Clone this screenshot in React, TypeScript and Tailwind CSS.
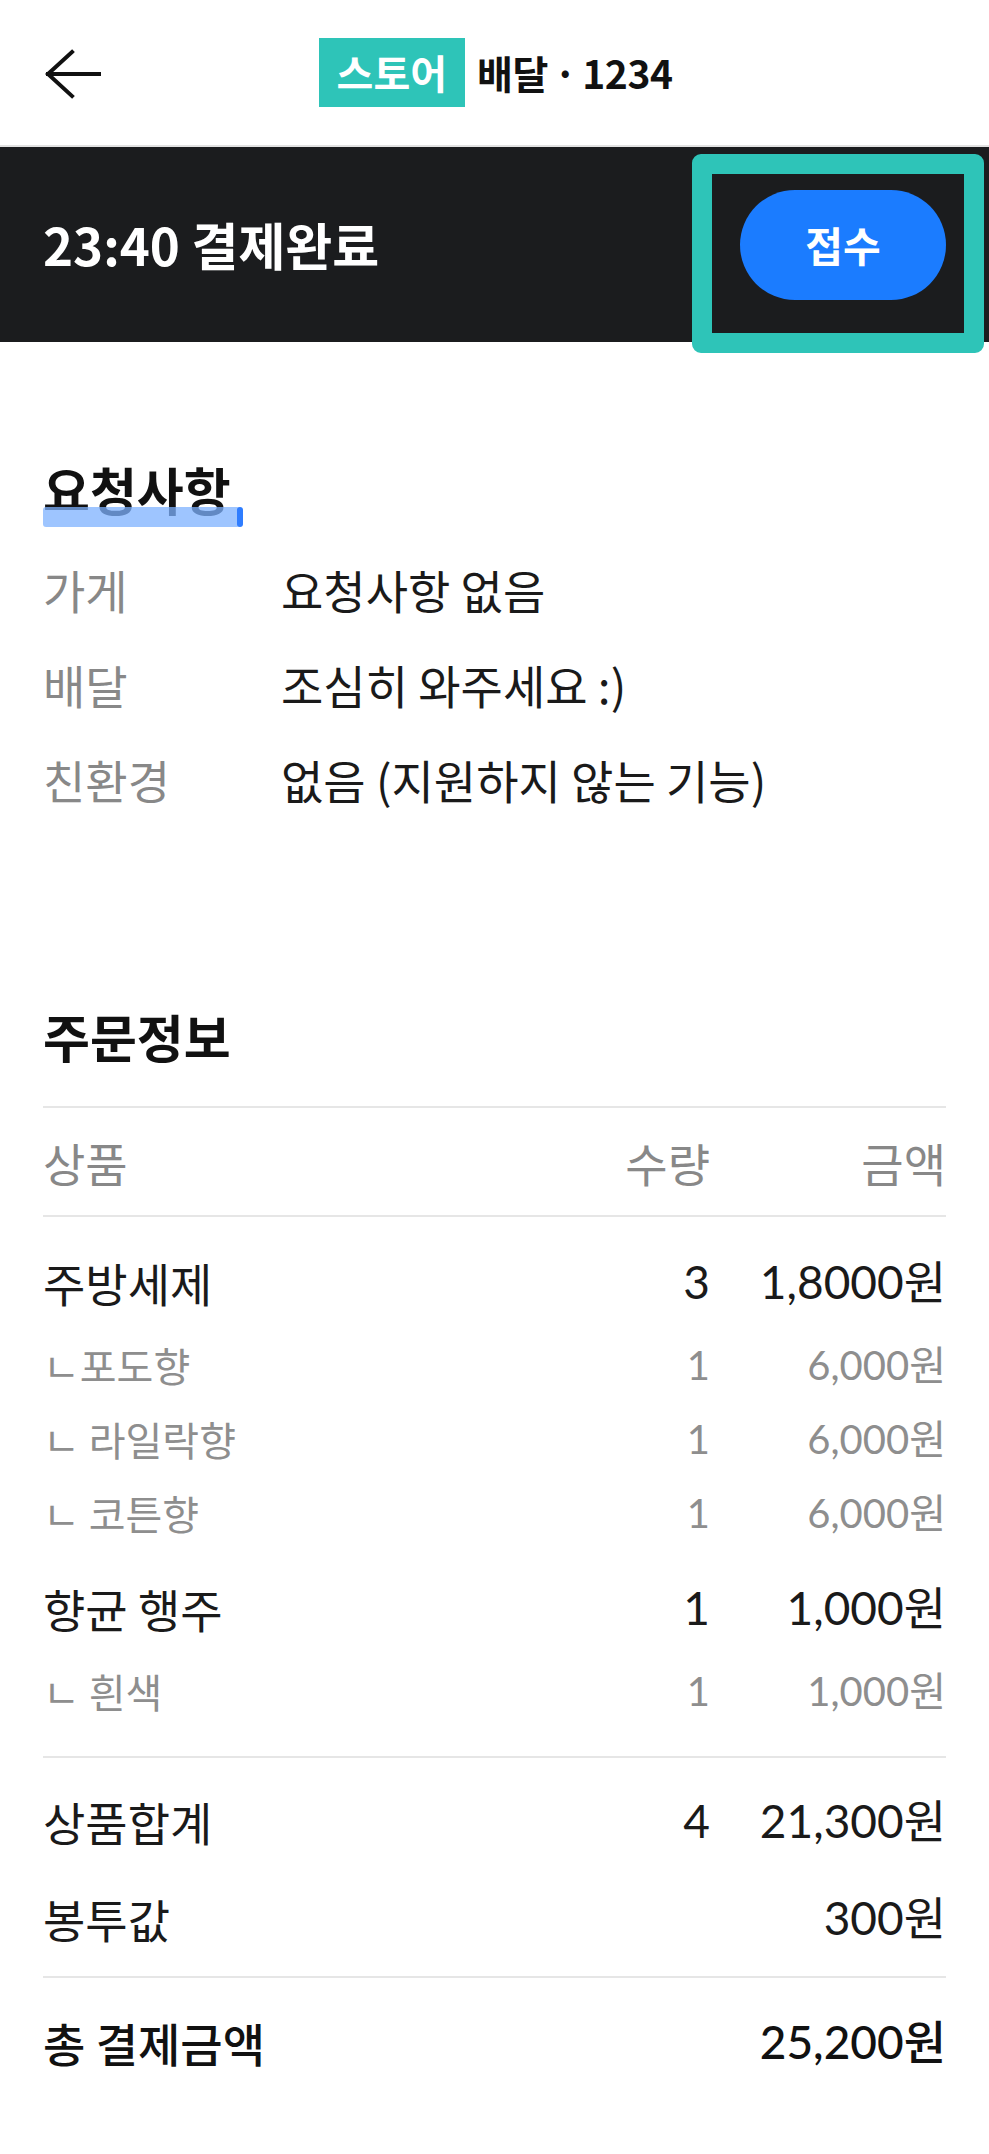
import { ReactNode } from "react";

const KR = "font-['Noto_Sans_CJK_KR',sans-serif]";
const NUM = "font-['Lato','Noto_Sans_CJK_KR',sans-serif]";

function BackArrow() {
  return (
    <svg width="56" height="50" viewBox="0 0 56 50" fill="none" stroke="#111" strokeWidth="4" strokeLinecap="square">
      <path d="M3 25H54" />
      <path d="M27 3L3 25L27 47" />
    </svg>
  );
}

function InfoRow({ label, value }: { label: string; value: string }) {
  return (
    <div className="flex h-[95px] items-center text-[46px] leading-none">
      <span className="w-[238px] text-[#888888]">{label}</span>
      <span className="text-[#1a1a1a]">{value}</span>
    </div>
  );
}

function ItemRow({
  name,
  qty,
  amount,
  sub,
}: {
  name: ReactNode;
  qty?: string;
  amount: string;
  sub?: boolean;
}) {
  const look = sub ? "h-[74px] text-[40px] text-[#8e8e8e]" : "h-[92px] text-[46px] text-[#1a1a1a]";
  return (
    <div className={`flex items-center leading-none ${look}`}>
      <span className="flex-1">{name}</span>
      <span className={`w-[60px] text-right ${NUM}`}>{qty}</span>
      <span className={`w-[236px] text-right ${NUM}`}>{amount}</span>
    </div>
  );
}

export default function App() {
  return (
    <div className={`relative w-[989px] min-h-[2154px] bg-white ${KR}`}>
      {/* top app bar */}
      <header className="relative flex h-[147px] items-center justify-center border-b-2 border-[#e2e2e2]">
        <div className="absolute left-[45px] top-[49px]">
          <BackArrow />
        </div>
        <div className="flex items-center gap-[12px] pb-[1px] pl-[2px]">
          <span className="flex h-[69px] items-center bg-[#2ec4b8] px-[18px] text-[40px] font-bold text-white">
            스토어
          </span>
          <span className="text-[39px] font-bold tracking-[-0.5px] text-[#111]">
            배달<span className="mx-[6px]">·</span>1234
          </span>
        </div>
      </header>

      {/* status bar */}
      <section className="flex h-[195px] items-center justify-between bg-[#1b1c1e] pl-[43px] pr-[43px]">
        <h1 className="text-[51px] font-bold leading-none text-white">23:40 결제완료</h1>
        <button className="h-[110px] w-[206px] rounded-full bg-[#1b7cff] text-[41px] font-bold text-white">
          접수
        </button>
      </section>

      {/* annotation frame around the accept button */}
      <div className="absolute left-[692px] top-[154px] h-[199px] w-[292px] rounded-[9px] border-[20px] border-[#2ec4b8]" />

      <main className="px-[43px] pt-[107px] pb-[60px]">
        {/* requests */}
        <div className="relative flex h-[80px] items-center">
          <h2 className="relative z-10 text-[51px] font-bold leading-none text-[#111]">요청사항</h2>
          <div className="absolute left-0 top-[58px] z-20 h-[20px] w-[200px] rounded-l-[3px] rounded-r-[6px] bg-[#7db2ff]/75">
            <div className="absolute right-0 top-0 h-[20px] w-[6px] rounded-full bg-[#2f7dff]" />
          </div>
        </div>
        <div className="mt-[12px]">
          <InfoRow label="가게" value="요청사항 없음" />
          <InfoRow label="배달" value="조심히 와주세요 :)" />
          <InfoRow label="친환경" value="없음 (지원하지 않는 기능)" />
        </div>

        {/* order info */}
        <div className="mt-[170px] flex h-[80px] items-center">
          <h2 className="text-[51px] font-bold leading-none text-[#111]">주문정보</h2>
        </div>
        <div className="mt-[30px] border-t-2 border-[#e6e6e6]" />
        <div className="flex h-[107px] items-center text-[46px] leading-none text-[#888888]">
          <span className="flex-1">상품</span>
          <span className="text-right">수량</span>
          <span className="w-[236px] text-right">금액</span>
        </div>
        <div className="border-t-2 border-[#e6e6e6]" />

        <div className="pt-[19px]">
          <ItemRow name="주방세제" qty="3" amount="1,8000원" />
          <ItemRow sub name="ㄴ포도향" qty="1" amount="6,000원" />
          <ItemRow sub name="ㄴ 라일락향" qty="1" amount="6,000원" />
          <ItemRow sub name="ㄴ 코튼향" qty="1" amount="6,000원" />
          <div className="h-[12px]" />
          <ItemRow name="향균 행주" qty="1" amount="1,000원" />
          <ItemRow sub name="ㄴ 흰색" qty="1" amount="1,000원" />
        </div>

        <div className="mt-[28px] border-t-2 border-[#e6e6e6]" />
        <div className="pt-[14px]">
          <div className="flex h-[97px] items-center text-[46px] leading-none text-[#1a1a1a]">
            <span className="flex-1">상품합계</span>
            <span className={`w-[60px] text-right ${NUM}`}>4</span>
            <span className={`w-[236px] text-right ${NUM}`}>21,300원</span>
          </div>
          <div className="flex h-[97px] items-center text-[46px] leading-none text-[#1a1a1a]">
            <span className="flex-1">봉투값</span>
            <span className={`w-[236px] text-right ${NUM}`}>300원</span>
          </div>
        </div>
        <div className="mt-[10px] border-t-2 border-[#e6e6e6]" />
        <div className="flex h-[128px] items-center text-[46px] leading-none text-[#111]">
          <span className="flex-1 font-medium">총 결제금액</span>
          <span className={`w-[236px] text-right font-medium ${NUM}`}>25,200원</span>
        </div>
      </main>
    </div>
  );
}
